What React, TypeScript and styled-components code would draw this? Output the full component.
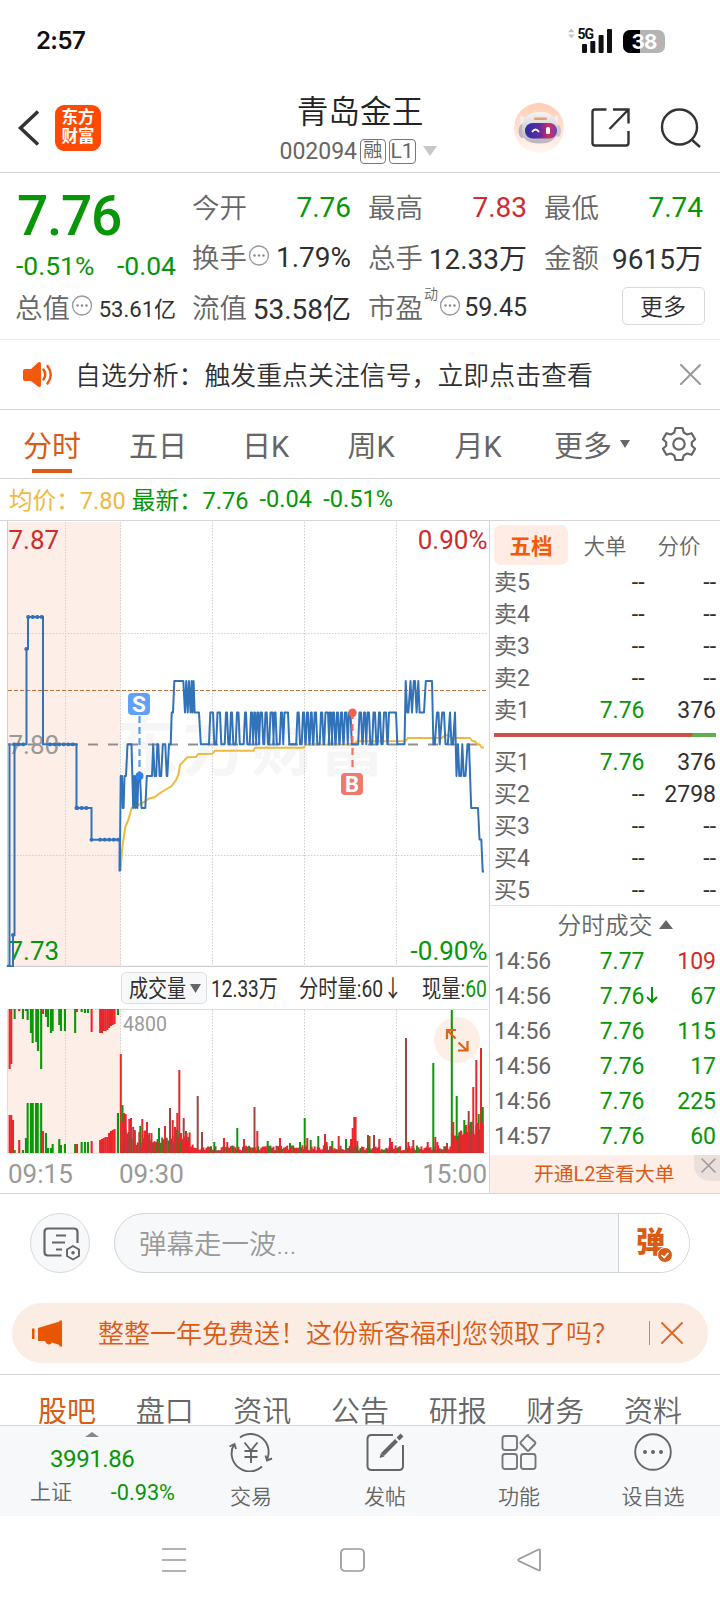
import React from 'react';
import styled, { createGlobalStyle } from 'styled-components';

const GREEN = '#079607';
const RED = '#cf2b2b';
const ORANGE = '#d95b16';
const GREY = '#666';
const INK = '#303030';
const LINE = '#d6d6d6';

const Global = createGlobalStyle`
  * { box-sizing: border-box; }
  body {
    margin: 0;
    background: #fff;
    color: ${INK};
    font-family: Roboto, "Noto Sans CJK SC", sans-serif;
    -webkit-font-smoothing: antialiased;
  }
  svg { display: block; flex: none; }
`;

const Screen = styled.div`
  width: 720px;
  height: 1604px;
  overflow: hidden;
  display: flex;
  flex-direction: column;
  background: #fff;
  white-space: nowrap;
`;

/* ---------- status bar and header ---------- */

const StatusBar = styled.div`
  height: 90px;
  flex: none;
  padding: 27px 55px 0 36px;
  display: flex;
  justify-content: space-between;
  align-items: flex-start;
`;

const Clock = styled.div`
  font: 600 24px/28px Inter, Roboto, sans-serif;
  color: #111;
  letter-spacing: -0.6px;
`;

const Header = styled.header`
  height: 83px;
  flex: none;
  border-bottom: 1px solid ${LINE};
  display: grid;
  grid-template-columns: 1fr 170px 1fr;
`;

const HeaderSide = styled.div<{ $end?: boolean }>`
  display: flex;
  align-items: center;
  height: 75px;
  padding: ${(p) => (p.$end ? '0 19px 0 0' : '0 0 0 17px')};
  justify-content: ${(p) => (p.$end ? 'flex-end' : 'flex-start')};
  gap: ${(p) => (p.$end ? '27px' : '15px')};
  > svg:last-child { margin-left: ${(p) => (p.$end ? '3px' : '0')}; }
`;

const AppLogo = styled.div`
  width: 46px;
  height: 46px;
  border-radius: 9px;
  background: #ff4a05;
  color: #fff;
  font-weight: 700;
  font-size: 16.5px;
  line-height: 19px;
  text-align: center;
  padding-top: 3px;
  white-space: normal;
`;

const TitleBlock = styled.div`
  display: flex;
  flex-direction: column;
  align-items: center;
`;

const StockName = styled.h1`
  margin: 3px 0 0;
  font-size: 31.7px;
  font-weight: 350;
  line-height: 40px;
  color: #222;
`;

const CodeRow = styled.div`
  display: flex;
  align-items: center;
  height: 34px;
  margin-top: 1px;
  padding-right: 4px;
  gap: 3px;
  font-size: 23px;
  color: ${GREY};
`;

const Badge = styled.span`
  height: 25px;
  width: 25.5px;
  border: 1px solid #777;
  border-radius: 4px;
  font-size: 19px;
  line-height: 22px;
  display: flex;
  justify-content: center;
`;

const WideBadge = styled(Badge)`
  width: 27px;
  font-size: 21px;
`;

const CodeArrow = styled.span`
  margin-left: 4px;
`;

/* ---------- quote summary ---------- */

const Quote = styled.section`
  height: 167px;
  flex: none;
  border-bottom: 1px solid #ececec;
  padding: 9px 17px 0 16px;
  display: flex;
  gap: 17px;
`;

const PriceColumn = styled.div`
  width: 160px;
  color: ${GREEN};
`;

const BigPrice = styled.div`
  font-size: 55px;
  font-weight: 500;
  line-height: 68px;
  letter-spacing: -1.3px;
  margin-left: 1px;
`;

const ChangeRow = styled.div`
  display: flex;
  justify-content: space-between;
  font-size: 26.5px;
  line-height: 32px;
`;

const StatGrid = styled.div`
  flex: 1;
  display: grid;
  grid-template-columns: repeat(3, 158px);
  grid-auto-rows: 50px;
  column-gap: 18px;
`;

const Stat = styled.div<{ $size?: number; $color?: string }>`
  height: 50px;
  display: flex;
  align-items: center;
  justify-content: space-between;
  color: ${(p) => p.$color ?? INK};
  font-size: ${(p) => p.$size ?? 28}px;
`;

const StatLabel = styled.span`
  display: flex;
  align-items: center;
  margin-left: -1px;
  padding-bottom: 2px;
  font-size: 27.5px;
  font-weight: 350;
  color: ${GREY};
`;

const Sup = styled.sup`
  font-size: 14px;
  line-height: 14px;
  margin: -24px 0 0 1px;
  align-self: center;
`;

const MoreButton = styled.button`
  justify-self: end;
  align-self: center;
  width: 83px;
  height: 38px;
  margin: 0 -1.5px 2px 0;
  padding: 0 0 3px;
  border: 1px solid #d9dadb;
  border-radius: 5px;
  background: #fff;
  font: inherit;
  font-weight: 350;
  font-size: 23px;
  color: ${INK};
`;

/* ---------- notice, period tabs, legend ---------- */

const Notice = styled.div`
  height: 70px;
  flex: none;
  border-bottom: 1px solid ${LINE};
  padding: 0 19px 0 22px;
  display: flex;
  align-items: center;
  font-size: 25.9px;
`;

const NoticeText = styled.div`
  flex: 1;
  margin-left: 22px;
  padding-bottom: 3px;
  font-weight: 350;
`;

const Periods = styled.nav`
  height: 69px;
  flex: none;
  border-bottom: 1px solid ${LINE};
  padding-left: 23px;
  display: grid;
  grid-template-columns: 106px 113px 105.5px 107px 99.5px 107px 1fr;
  align-items: center;
`;

const Period = styled.div<{ $active?: boolean }>`
  display: flex;
  align-items: center;
  gap: 8px;
  height: 68px;
  padding-bottom: 1px;
  font-size: 29px;
  color: ${(p) => (p.$active ? ORANGE : GREY)};
  background: ${(p) =>
    p.$active ? `linear-gradient(${ORANGE}, ${ORANGE}) 9px 59px / 40px 4px no-repeat` : 'none'};
`;

const Legend = styled.div`
  height: 42px;
  flex: none;
  border-bottom: 1px solid ${LINE};
  padding: 0 0 2px 9px;
  display: flex;
  align-items: center;
  font-size: 23.6px;
  color: ${GREEN};
`;

const LegendItem = styled.span<{ $gap: number; $color?: string }>`
  margin-right: ${(p) => p.$gap}px;
  color: ${(p) => p.$color ?? 'inherit'};
`;

/* ---------- trading area ---------- */

const Trading = styled.main`
  height: 673px;
  flex: none;
  display: flex;
  border-bottom: 1px solid ${LINE};
`;

const Charts = styled.div`
  width: 490px;
  border-right: 1px solid ${LINE};
`;

const VolumeBar = styled.div`
  height: 42px;
  padding: 5px 0 0 121px;
  display: flex;
  align-items: flex-start;
`;

const VolumeSelect = styled.div`
  width: 87px;
  height: 32px;
  border: 1px solid #dcdee0;
  border-radius: 5px;
  background: #f7f8fa;
  padding: 1px 5px 0 7px;
  display: flex;
  align-items: center;
  justify-content: space-between;
`;

const Narrow = styled.div<{ $w: number; $ml?: number; $k?: number }>`
  width: ${(p) => p.$w}px;
  margin-left: ${(p) => p.$ml ?? 0}px;
  flex: none;
  font-size: 23.5px;
  line-height: 34px;
  > span {
    display: inline-block;
    transform: scaleX(${(p) => p.$k ?? 0.8});
    transform-origin: left center;
  }
`;

const TimeAxis = styled.div`
  height: 39px;
  padding: 0 2px 0 8px;
  display: flex;
  align-items: center;
  font-size: 26px;
  color: #999;
`;

const AxisLabel = styled.span<{ $w?: number }>`
  width: ${(p) => (p.$w ? `${p.$w}px` : 'auto')};
  margin-left: ${(p) => (p.$w ? '0' : 'auto')};
`;

const Book = styled.aside`
  flex: 1;
  display: flex;
  flex-direction: column;
  > * { flex: none; }
`;

const BookTabs = styled.div`
  height: 46px;
  padding: 4px 4px 0 4px;
  display: flex;
`;

const BookTab = styled.div<{ $active?: boolean }>`
  width: 74px;
  height: 40px;
  border-radius: 7px;
  text-align: center;
  line-height: 43px;
  font-size: 21.5px;
  font-weight: ${(p) => (p.$active ? 700 : 350)};
  color: ${(p) => (p.$active ? '#f25a08' : GREY)};
  background: ${(p) => (p.$active ? '#ffece4' : 'transparent')};
`;

const Row = styled.div<{ $h: number }>`
  height: ${(p) => p.$h}px;
  line-height: ${(p) => p.$h}px;
  padding: 0 4px 0 4px;
  display: grid;
  grid-template-columns: 71px 79.5px 1fr;
  font-size: 23px;
`;

const Cell = styled.span<{ $right?: boolean; $color?: string }>`
  text-align: ${(p) => (p.$right ? 'right' : 'left')};
  color: ${(p) => p.$color ?? INK};
`;

const Down = styled.span`
  display: inline-block;
  width: 0;
  > svg { display: inline-block; margin-left: 1px; }
`;

const RatioBar = styled.div`
  height: 4px;
  margin: 6px 4px 10px 4px;
  background: linear-gradient(115deg, #cc4f4b 88.7%, #5fae50 89.1%);
`;

const TicksTitle = styled.div`
  height: 39px;
  margin-top: -2px;
  border-top: 1px solid #e2e2e2;
  display: flex;
  align-items: center;
  justify-content: center;
  gap: 7px;
  padding: 0 0 2px 21px;
  font-size: 23.7px;
  font-weight: 350;
  color: ${GREY};
`;

const L2Banner = styled.div`
  height: 38.4px;
  display: flex;
  background: #fdeee8;
  color: ${ORANGE};
  font-size: 19.8px;
  line-height: 39px;
  padding-left: 44px;
  justify-content: space-between;
`;

const CornerClose = styled.div`
  width: 26px;
  height: 26px;
  border-bottom-left-radius: 16px;
  background: #ebdfdb;
  padding: 3px 0 0 7px;
`;

/* ---------- comment bar and promo ---------- */

const CommentRow = styled.div`
  height: 109px;
  flex: none;
  padding: 19px 30px 0;
  display: flex;
  gap: 24px;
`;

const RoundButton = styled.div`
  width: 60px;
  height: 60px;
  border: 1px solid #d7d9dd;
  border-radius: 50%;
  background: #f7f8fa;
  padding: 13px 0 0 12px;
`;

const CommentBox = styled.div`
  flex: 1;
  height: 60px;
  border: 1px solid #d3d5d8;
  border-radius: 30px;
  background: #f7f8fa;
  overflow: hidden;
  display: flex;
  justify-content: space-between;
  padding-left: 24px;
  font-size: 27.5px;
  font-weight: 350;
  line-height: 61px;
  color: #999;
`;

const SendButton = styled.div`
  width: 71px;
  border-left: 1px solid #d3d5d8;
  background: #fff;
  padding-left: 17px;
  display: flex;
  color: ${ORANGE};
  font-size: 29px;
  font-weight: 900;
  line-height: 59px;
  > svg { margin: 33px 0 0 -8px; }
`;

const Promo = styled.div`
  height: 60px;
  flex: none;
  margin: 0 12px 11px;
  border-radius: 30px;
  background: #fcede4;
  padding: 0 25px 0 20px;
  display: flex;
  align-items: center;
  font-size: 26px;
  font-weight: 350;
  color: ${ORANGE};
`;

const PromoText = styled.div`
  flex: 1;
  margin-left: 35px;
  padding-bottom: 3px;
`;

const PromoDivider = styled.i`
  width: 1px;
  height: 24px;
  background: #c98a55;
  margin-right: 11px;
`;

/* ---------- bottom ---------- */

const Sections = styled.nav`
  height: 52px;
  flex: none;
  overflow: hidden;
  border-top: 1px solid ${LINE};
  border-bottom: 1px solid ${LINE};
  padding: 16px 38px 0;
  display: flex;
  justify-content: space-between;
  font-size: 29px;
  font-weight: 350;
  line-height: 42px;
`;

const Section = styled.span<{ $active?: boolean }>`
  font-weight: ${(p) => (p.$active ? 400 : 350)};
  color: ${(p) => (p.$active ? ORANGE : GREY)};
`;

const BottomBar = styled.footer`
  height: 90px;
  flex: none;
  background: #f7f8fa;
  display: grid;
  grid-template-columns: 184px repeat(4, 134px);
`;

const IndexCell = styled.div`
  padding: 6px 9px 0 30px;
  color: ${GREEN};
`;

const IndexArrow = styled.div`
  padding-left: 55px;
`;

const IndexValue = styled.div`
  font-size: 24px;
  line-height: 34px;
  margin-top: 5px;
  padding-left: 20px;
  letter-spacing: -0.4px;
`;

const IndexRow = styled.div`
  display: flex;
  justify-content: space-between;
  font-size: 21.7px;
  line-height: 33px;
`;

const IndexName = styled.span`
  font-size: 21px;
  font-weight: 350;
  color: ${GREY};
`;

const Action = styled.div`
  display: flex;
  flex-direction: column;
  align-items: center;
  gap: 9px;
  padding-top: 6px;
  font-size: 21px;
  font-weight: 350;
  line-height: 32px;
  color: ${GREY};
`;

const SystemNav = styled.div`
  flex: 1;
  display: flex;
  gap: 152.5px;
  padding: 32px 0 0 161px;
`;

/* ---------- small icons ---------- */

const Triangle = ({ w, h, up, color = '#666' }: { w: number; h: number; up?: boolean; color?: string }) => (
  <svg width={w} height={h} viewBox="0 0 10 10" preserveAspectRatio="none" fill={color}>
    <path d={up ? 'M0 10L5 0L10 10Z' : 'M0 0H10L5 10Z'} />
  </svg>
);

const Cross = ({ size, color, w = 2 }: { size: number; color: string; w?: number }) => (
  <svg width={size} height={size} stroke={color} strokeWidth={w} strokeLinecap="round">
    <path d={`M1 1L${size - 1} ${size - 1}M${size - 1} 1L1 ${size - 1}`} />
  </svg>
);

const InfoIcon = styled.svg`
  margin-left: 1px;
`;

const InfoDots = () => (
  <InfoIcon width="22" height="22">
    <circle cx="11" cy="10.500" r="9.500" fill="none" stroke="#999" strokeWidth="1.300" />
    <g fill="#888">
      <circle cx="6.500" cy="10.500" r="1.200" />
      <circle cx="11" cy="10.500" r="1.200" />
      <circle cx="15.500" cy="10.500" r="1.200" />
    </g>
  </InfoIcon>
);

const StatusIcons = () => (
  <svg width="100" height="30" viewBox="0 0 100 30">
    <path d="M3 5.200L6.300 1.500L9.500 5.200ZM3 7.600L6.300 11.200L9.500 7.600Z" fill="#c4c4c4" />
    <text x="12.500" y="12" fontFamily="Roboto" fontWeight="700" fontSize="14" letterSpacing="-1" fill="#111">5G</text>
    <g fill="#111">
      <rect x="17" y="17" width="5" height="9" rx="1" />
      <rect x="25.300" y="14" width="5" height="12" rx="1" />
      <rect x="33.600" y="8" width="5" height="18" rx="1" />
      <rect x="42" y="2" width="5" height="24" rx="1" />
    </g>
    <rect x="58" y="3" width="42" height="23" rx="7" fill="#b4b4b4" />
    <rect x="98" y="10" width="4" height="9" rx="2" fill="#b4b4b4" />
    <path d="M75 3H65a7 7 0 0 0-7 7v9a7 7 0 0 0 7 7h10Z" fill="#000" />
    <text x="79" y="22.300" textAnchor="middle" fontFamily="Inter" fontWeight="700" fontSize="20.500" letterSpacing="-0.800" fill="#fff">38</text>
  </svg>
);

const Robot = () => (
  <svg width="50" height="50" viewBox="0 0 50 50">
    <defs>
      <linearGradient id="halo" x1="0" y1="0" x2="0" y2="1">
        <stop offset="0" stopColor="#ffcdb4" />
        <stop offset="1" stopColor="#fff6f1" />
      </linearGradient>
      <linearGradient id="visor" x1="0" y1="0" x2="1" y2="0">
        <stop offset="0" stopColor="#2b2f9e" />
        <stop offset=".45" stopColor="#5e2ba3" />
        <stop offset=".75" stopColor="#d0305c" />
        <stop offset="1" stopColor="#6a3fc0" />
      </linearGradient>
      <linearGradient id="shell" x1="0" y1="0" x2="0" y2="1">
        <stop offset="0" stopColor="#f8f3f3" />
        <stop offset="1" stopColor="#b9b4bd" />
      </linearGradient>
    </defs>
    <circle cx="25" cy="25" r="25" fill="url(#halo)" />
    <path d="M7 21L5.500 12L14 16ZM43 21L44.500 12L36 16Z" fill="#f4eff0" />
    <ellipse cx="8.500" cy="28" rx="4" ry="7" fill="#b9b6be" />
    <ellipse cx="44" cy="28" rx="3" ry="6" fill="#c9c6ce" />
    <path d="M8 26C8 14 15 9 26 9C37 9 43.500 15 43.500 26C43.500 36 37 40.500 26 40.500C14 40.500 8 37 8 26Z" fill="url(#shell)" />
    <rect x="11" y="20" width="32" height="15.500" rx="7.500" fill="url(#visor)" />
    <path d="M18 29q3.500-5 7 0" stroke="#fff" strokeWidth="1.800" fill="none" />
    <rect x="32" y="24" width="4" height="7" rx="1.500" fill="#fff" />
    <rect x="20" y="14.500" width="13" height="2.500" rx="1" fill="#e0a06c" />
  </svg>
);

const Gear = () => (
  <svg width="36" height="36" viewBox="0 0 36 36" fill="none" stroke="#666" strokeWidth="2.200">
    <path d="M14.500 2H21.500L22.800 6.600L26.200 8.500L30.600 7.200L34.100 13.200L30.800 16.200V19.800L34.100 22.800L30.600 28.800L26.200 27.500L22.800 29.400L21.500 34H14.500L13.200 29.400L9.800 27.500L5.400 28.800L1.900 22.800L5.200 19.800V16.200L1.900 13.200L5.400 7.200L9.800 8.500L13.200 6.600Z" strokeLinejoin="round" />
    <circle cx="18" cy="18" r="5.700" />
  </svg>
);

/* ---------- price chart ---------- */

const TOP = 521;
const L = { a: 681, b: 712.5, c: 744.3, d: 776, e: 808 };

const preOpen =
  'M8.500 744.300H9.500V966.500H13V935H14.500V744.300H26.500V649H28V617H43V744.300H76.500V808H91.500V839.700H119.600V871.500';

const early: [number, number][] = [
  [119.8, 871], [120.7, L.d], [122, L.d], [122.7, L.e], [123.6, L.e], [124.5, L.d], [126, L.d], [127.5, L.c],
  [131.5, L.c], [133.2, L.e], [134.3, L.d], [135.4, L.e], [136.2, L.d], [137.4, L.e], [138.4, L.d], [140, L.d],
  [141.5, L.e], [145.3, L.e], [146.8, L.d], [152, L.d], [153.2, L.c], [154.6, L.d], [156.2, L.d], [157.3, L.c],
  [158.3, L.c], [159.6, L.d], [161.2, L.d], [162.8, L.c], [165.3, L.c], [166.7, L.d], [167.3, L.d], [169, L.c],
  [170.7, L.c], [171.7, L.b], [173, L.b], [174.3, L.a], [183.3, L.a], [185, L.b], [186.2, L.a], [187.7, L.b],
  [188.9, L.a], [190.5, L.b], [191.6, L.a], [192.5, L.b], [193.6, L.a], [194.6, L.b], [199, L.b], [200.8, L.c],
];

/* spans [from, to] during which the price sits one tick above the previous close */
const peaks: [number, number][] = [
  [210.3, 213], [217.5, 220], [226, 227], [231, 232], [237, 238.5], [245, 246], [251, 252], [254.3, 255],
  [257.3, 258], [260.3, 262], [265.5, 266.7], [270.5, 272.5], [274.5, 275.5], [281, 282], [284.5, 288],
  [297.5, 298.7], [303, 304], [307, 308], [311, 311.7], [314.7, 316], [321, 322.2], [325.5, 328],
  [330, 331], [333, 334], [337, 338], [341, 342], [345, 346.5], [349, 350.5], [359.5, 361], [364, 365],
  [367.5, 369], [373.5, 375], [379, 380], [384, 386], [389, 396],
];

const late: [number, number][] = [
  [397, L.c], [404.5, L.c], [405.7, L.a], [407.2, L.b], [408.4, L.b], [410.5, L.a], [412, L.b], [413.8, L.a],
  [415, L.a], [416.6, L.b], [418.3, L.a], [419.6, L.b], [424, L.b], [425.8, L.a], [432, L.a], [433.4, L.c],
  [434.8, L.c], [437, L.b], [438.5, L.b], [439.7, L.c], [442.2, L.b], [444, L.b], [445.5, L.c], [447.8, L.c],
  [450, L.b], [451.5, L.c], [453, L.c], [455, L.b], [456.5, L.d], [458, L.c], [459.3, L.d], [461, L.d],
  [462.3, L.c], [463.7, L.d], [465.5, L.d], [467.5, L.c], [469, L.c], [471.2, L.e], [478, L.e], [479.5, 839.5],
  [481.3, 839.5], [482.7, 871.6], [484, 871.6],
];

const session: [number, number][] = [
  ...early,
  ...peaks.flatMap(([s, e]): [number, number][] => [[s - 1.3, L.c], [s, L.b], [e, L.b], [e + 1.3, L.c]]),
  ...late,
];

const average =
  '120.500,871 122.300,847 125.300,827 128.300,820 131.700,808 138.300,805 145,801.500 148.300,798.700 155,797 158,794.500 161.700,792 166.700,789 171.700,786 176,780 178.300,775 180,765 187.300,757.300 196,757 198,754 212.500,753.700 215,750.700 253.500,750.700 255,747.700 303.500,747.700 306,744.700 353,744.500 357.300,741.300 405.700,741 407.700,738 441.700,738 445,735.300 449.300,735.300 451,738 470,738 472.300,741 475,741.300 477.300,744.300 479.500,744.300 481.700,747.300 484,747.700';

const toPoints = (list: [number, number][]) => list.map((p) => p.join(',')).join(' ');

const PriceChart = () => (
  <svg width="489" height="446" viewBox={`0 ${TOP} 489 446`} fontFamily="Roboto, 'Noto Sans CJK SC', sans-serif" fontSize="26">
    <rect x="8" y="522" width="112.500" height="444" fill="#fdeee8" />
    <text x="114" y="770" fontSize="65" fontWeight="700" fill="#f6f6f6" letterSpacing="3.500">东方财富</text>
    <path d="M7.500 521V967" stroke="#d2d2d2" />
    <path d="M8 966.500H488" stroke="#d0d0d0" strokeWidth="1.500" />
    <path d="M65.500 522V966M120.500 522V966M212.500 522V966M304.500 522V966M396.500 522V966M8 633.500H487M8 855.500H487" stroke="#cfcfcf" strokeDasharray="1.500 1.500" fill="none" />
    <path d="M8 690.500H487" stroke="#c0713d" strokeWidth="1.200" strokeDasharray="4 2" />
    <path d="M8 744.500H487" stroke="#8f8f8f" strokeWidth="1.800" strokeDasharray="10 10" />
    <text x="8.500" y="753.500" fill="#999">7.80</text>
    <text x="8.500" y="548.800" fill={RED}>7.87</text>
    <text x="8.500" y="959.800" fill={GREEN}>7.73</text>
    <text x="487.500" y="548.800" textAnchor="end" fill={RED}>0.90%</text>
    <text x="487.500" y="959.800" textAnchor="end" fill={GREEN}>-0.90%</text>
    <polyline points={average} fill="none" stroke="#efb83e" strokeWidth="2" strokeLinejoin="round" />
    <path d={preOpen} fill="none" stroke="#3272b8" strokeWidth="2" />
    <path d="M8.500 966.500H12.500M14 744.300H26M28 617H43M50 744.300H76M77 808H90M100 839.700H119" stroke="#3272b8" strokeWidth="3.800" strokeLinecap="round" strokeDasharray="0.500 4" />
    <g fill="#3272b8">
      <circle cx="26.300" cy="649" r="2" />
      <circle cx="13" cy="935" r="2" />
      <circle cx="76.500" cy="808" r="2" />
      <circle cx="91.500" cy="839.700" r="2" />
    </g>
    <polyline points={toPoints(session)} fill="none" stroke="#3272b8" strokeWidth="2" strokeLinejoin="round" />
    <path d="M139.500 716V776" stroke="#5a9cf0" strokeWidth="2.200" strokeDasharray="7 4" />
    <circle cx="139.500" cy="776" r="4" fill="#2f80ea" />
    <rect x="128" y="693" width="22" height="22" rx="4" fill="#62a0f5" />
    <text x="139" y="712" textAnchor="middle" fontSize="22.500" fontWeight="700" fill="#fff">S</text>
    <path d="M352.500 712V772" stroke="#ee7364" strokeWidth="2.200" strokeDasharray="7 5" />
    <circle cx="352.500" cy="712.700" r="4.200" fill="#f26052" />
    <rect x="341" y="773" width="22" height="22" rx="4" fill="#ee7a6b" />
    <text x="352" y="791.800" textAnchor="middle" fontSize="22" fontWeight="700" fill="#fff">B</text>
  </svg>
);

/* ---------- volume chart ---------- */

const VR = '#e8262b';
const VG = '#0a980a';
const VM = '#a34240';

type Bar = [number, number, string];

const spikes: Bar[] = [
  [120.800, 99, VR], [122.500, 48, VG], [124, 40, VR], [125.700, 39, VR], [129.300, 34, VR], [131, 35, VR], [134.700, 23, VR],
  [140.300, 27, VG], [142.300, 34, VR], [144.500, 22, VR], [147, 31, VR], [149.300, 20, VR], [159, 25, VG], [165, 27, VR], [170, 45, VM],
  [172.700, 33, VR], [175, 26, VR], [177.300, 40, VR], [179.300, 83, VR], [181, 20, VR], [183.700, 35, VM], [186, 22, VG],
  [188.300, 16, VG], [197.700, 57, VM], [202, 21, VM], [214.300, 11, VG], [224, 15, VR], [227.300, 11, VR], [237.300, 25, VG],
  [244, 14, VR], [254.500, 46, VM], [257.300, 22, VR], [267.700, 12, VG], [280, 15, VR], [290, 10, VG], [300, 11, VG], [304.700, 35, VG],
  [307.300, 15, VR], [310.700, 13, VG], [318.300, 17, VG], [325, 19, VR], [326.700, 11, VR], [332.300, 12, VG], [338.700, 17, VR],
  [346, 14, VG], [351, 14, VR], [352.700, 25, VR], [354.300, 36, VR], [355.600, 36, VR], [357.300, 12, VR], [368, 18, VG],
  [369.500, 17, VR], [374, 18, VM], [379.300, 14, VR], [390, 15, VR], [392, 11, VR], [406, 115, VM], [408.300, 11, VR], [413.300, 13, VM],
  [427.700, 11, VR], [433.300, 90, VG], [435.300, 16, VR], [437.300, 11, VR], [447, 10, VR], [451.800, 143, VG], [453.300, 31, VR],
  [456.700, 57, VG], [459.300, 20, VR], [461.300, 22, VG], [464.300, 33, VG], [466, 28, VR], [468.700, 42, VM], [470.700, 31, VG],
  [473.300, 66, VR], [476.300, 93, VR], [478.700, 39, VG], [481, 105, VR], [482.800, 46, VG],
];

/* low base level of volume along the session */
const base = (x: number) => {
  if (x < 135) return 24;
  if (x < 152) return 17;
  if (x < 170) return 11;
  if (x < 190) return 17;
  if (x < 197) return 9;
  if (x < 450) return 5.5;
  return 14 + (x - 450) * 0.5;
};

const fill: Bar[] = Array.from({ length: 238 }, (_, i): Bar => {
  const x = 121 + i * 1.525;
  const n = Math.abs(Math.sin(i * 12.9898) * 43758.5453) % 1;
  const m = Math.abs(Math.sin(i * 78.233) * 12543.123) % 1;
  return [x, base(x) * (0.45 + n * 0.95), m < 0.65 ? VR : m < 0.85 ? VM : '#3c7a1c'];
});

const preTop: Bar[] = [
  [9.700, 60, VR], [11.300, 55, VR], [14.700, 10, VG], [19.300, 2, VR], [23, 10, VG], [26, 2, VG], [27.700, 11, VG],
  [31, 24, VG], [32.700, 34, VG], [36.300, 33, VG], [38, 42, VG], [41.200, 60, VG], [43, 5, VR], [46, 8, VG], [48, 18, VG],
  [51, 24, VG], [52.700, 22, VG], [59.300, 16, VG], [61, 22, VG], [65, 22, VG], [75.200, 24, VG], [77, 3, VR], [81.700, 3, VG],
  [85, 4, VG], [88, 4, VG], [91.700, 23, VR], [100.200, 24, VR], [102, 24, VR], [103.800, 22, VR], [105.600, 22, VR], [107.400, 21, VR],
  [109.200, 19, VR], [111, 17, VR], [112.800, 16, VR], [114.600, 15, VR], [118, 6, VG],
];

const preBottom: Bar[] = [
  [9.700, 38, VR], [11.300, 38, VR], [13, 33, VR], [14.700, 3, VG], [19.300, 13, VR], [23, 3, VG], [26, 15, VG], [27.700, 50, VG],
  [31, 50, VG], [32.800, 50, VG], [36, 50, VG], [37.800, 50, VG], [41.200, 50, VG], [43, 22, VR], [46, 20, VG], [48, 5, VG],
  [51, 5, VG], [52.700, 9, VG], [59.300, 14, VG], [61, 8, VG], [65, 9, VG], [75.200, 9, VG], [77, 9, VR], [81.700, 11, VG],
  [85, 11, VG], [88, 11, VG], [91.700, 12, VR], [100.200, 13, VR], [102, 14, VR], [103.800, 15, VR], [105.600, 16, VR], [107.400, 16, VR],
  [109.200, 20, VR], [111, 22, VR], [112.800, 23, VR], [114.600, 24, VR], [118, 40, VG],
];

const VolumeChart = () => (
  <svg width="489" height="145" viewBox="0 1009 489 145" fontFamily="Roboto, sans-serif">
    <rect x="8" y="1009" width="112.500" height="144" fill="#fdeee8" />
    <path d="M7.500 1009V1153M7 1009.500H488M7 1153.200H488" stroke="#dcdcdc" fill="none" />
    <path d="M65.500 1010V1152M120.500 1010V1152M212.500 1010V1152M304.500 1010V1152M396.500 1010V1152" stroke="#cfcfcf" strokeDasharray="1.500 1.500" />
    {preTop.map(([x, h, c]) => <rect key={x} x={x - 1.1} y={1009} width={2.1} height={h} fill={c} />)}
    {preBottom.map(([x, h, c]) => <rect key={x} x={x - 1.1} y={1153 - h} width={2.1} height={h} fill={c} />)}
    <circle cx="457" cy="1040" r="23" fill="#fdeee6" />
    {spikes.map(([x, h, c]) => <rect key={x} x={x - 1} y={1153 - h} width={2} height={h} fill={c} />)}
    {fill.map(([x, h, c]) => <rect key={x} x={x - 1} y={1153 - h} width={2} height={h} fill={c} />)}
    <text x="123" y="1031" fontSize="19.500" fill="#999">4800</text>
    <path d="M447 1039V1030H456M447.500 1030.500L455.500 1038.500M458.500 1042.500L467 1050.500M467.500 1041V1050.500H458" stroke="#dc6417" strokeWidth="2.200" fill="none" />
  </svg>
);

const NOTHING = '--';
const sells = [
  ['卖5', NOTHING, NOTHING], ['卖4', NOTHING, NOTHING], ['卖3', NOTHING, NOTHING], ['卖2', NOTHING, NOTHING], ['卖1', '7.76', '376'],
];
const buys = [
  ['买1', '7.76', '376'], ['买2', NOTHING, '2798'], ['买3', NOTHING, NOTHING], ['买4', NOTHING, NOTHING], ['买5', NOTHING, NOTHING],
];
const ticks = [
  ['14:56', '7.77', '109'], ['14:56', '7.76', '67'], ['14:56', '7.76', '115'],
  ['14:56', '7.76', '17'], ['14:56', '7.76', '225'], ['14:57', '7.76', '60'],
];

const Levels = ({ rows }: { rows: string[][] }) => (
  <>
    {rows.map(([name, price, qty]) => (
      <Row key={name} $h={32}>
        <Cell $color={GREY}>{name}</Cell>
        <Cell $right $color={price === NOTHING ? INK : GREEN}>{price}</Cell>
        <Cell $right>{qty}</Cell>
      </Row>
    ))}
  </>
);

const Current = styled.b`
  font-weight: 400;
  color: ${GREEN};
`;

export default function App() {
  return (
    <Screen>
      <Global />
      <StatusBar>
        <Clock>2:57</Clock>
        <StatusIcons />
      </StatusBar>

      <Header>
        <HeaderSide>
          <svg width="23" height="36" fill="none" stroke="#333" strokeWidth="3.500">
            <path d="M21 1.500L3.500 18L21 34.500" />
          </svg>
          <AppLogo>东方<br />财富</AppLogo>
        </HeaderSide>
        <TitleBlock>
          <StockName>青岛金王</StockName>
          <CodeRow>
            002094
            <Badge>融</Badge>
            <WideBadge>L1</WideBadge>
            <CodeArrow><Triangle w={14} h={10} color="#c8c8c8" /></CodeArrow>
          </CodeRow>
        </TitleBlock>
        <HeaderSide $end>
          <Robot />
          <svg width="39" height="39" fill="none" stroke="#333" strokeWidth="2.400">
            <path d="M15.500 1.500H4Q1.500 1.500 1.500 4V35Q1.500 37.500 4 37.500H35Q37.500 37.500 37.500 35V23M22 1.500H37.500V15.500M37 2L18.500 21" />
          </svg>
          <svg width="41" height="40" fill="none" stroke="#333" strokeWidth="2.400">
            <circle cx="19.500" cy="19" r="17.500" />
            <path d="M31.500 31.500L40 39" />
          </svg>
        </HeaderSide>
      </Header>

      <Quote>
        <PriceColumn>
          <BigPrice>7.76</BigPrice>
          <ChangeRow><span>-0.51%</span><span>-0.04</span></ChangeRow>
          <Stat $size={22}><StatLabel>总值<InfoDots /></StatLabel>53.61亿</Stat>
        </PriceColumn>
        <StatGrid>
          <Stat $color={GREEN}><StatLabel>今开</StatLabel>7.76</Stat>
          <Stat $color={RED}><StatLabel>最高</StatLabel>7.83</Stat>
          <Stat $color={GREEN}><StatLabel>最低</StatLabel>7.74</Stat>
          <Stat><StatLabel>换手<InfoDots /></StatLabel>1.79%</Stat>
          <Stat><StatLabel>总手</StatLabel>12.33万</Stat>
          <Stat><StatLabel>金额</StatLabel>9615万</Stat>
          <Stat><StatLabel>流值</StatLabel>53.58亿</Stat>
          <Stat $size={25}><StatLabel>市盈<Sup>动</Sup><InfoDots /></StatLabel>59.45</Stat>
          <MoreButton>更多</MoreButton>
        </StatGrid>
      </Quote>

      <Notice>
        <svg width="31" height="28" viewBox="0 0 31 28" fill="#f2590c">
          <path d="M3 8H9L16 1.500Q19 0 19 3V24Q19 27 16 25.500L9 20H3Q1 20 1 18V10Q1 8 3 8Z" />
          <path d="M21.500 8.500Q25 13.500 21.500 18.500M25.500 5Q32 13.500 25.500 22.500" fill="none" stroke="#f2590c" strokeWidth="2.500" strokeLinecap="round" />
        </svg>
        <NoticeText>自选分析：触发重点关注信号，立即点击查看</NoticeText>
        <Cross size={21} color="#999" />
      </Notice>

      <Periods>
        <Period $active>分时</Period>
        <Period>五日</Period>
        <Period>日K</Period>
        <Period>周K</Period>
        <Period>月K</Period>
        <Period>更多<Triangle w={10} h={8} /></Period>
        <Gear />
      </Periods>

      <Legend>
        <LegendItem $gap={6} $color="#efb83e">均价：7.80</LegendItem>
        <LegendItem $gap={11}>最新：7.76</LegendItem>
        <LegendItem $gap={11}>-0.04</LegendItem>
        <LegendItem $gap={0}>-0.51%</LegendItem>
      </Legend>

      <Trading>
        <Charts>
          <PriceChart />
          <VolumeBar>
            <VolumeSelect>
              <Narrow $w={58} $k={0.81}><span>成交量</span></Narrow>
              <Triangle w={11} h={9} />
            </VolumeSelect>
            <Narrow $w={70} $ml={4} $k={0.81}><span>12.33万</span></Narrow>
            <Narrow $w={102} $ml={18} $k={0.82}><span>分时量:60↓</span></Narrow>
            <Narrow $w={67} $ml={21} $k={0.82}><span>现量:<Current>60</Current></span></Narrow>
          </VolumeBar>
          <VolumeChart />
          <TimeAxis>
            <AxisLabel $w={111}>09:15</AxisLabel>
            <AxisLabel $w={70}>09:30</AxisLabel>
            <AxisLabel>15:00</AxisLabel>
          </TimeAxis>
        </Charts>

        <Book>
          <BookTabs>
            <BookTab $active>五档</BookTab>
            <BookTab>大单</BookTab>
            <BookTab>分价</BookTab>
          </BookTabs>
          <Levels rows={sells} />
          <RatioBar />
          <Levels rows={buys} />
          <TicksTitle>分时成交<Triangle w={14} h={9} up /></TicksTitle>
          {ticks.map(([time, price, qty], i) => (
            <Row key={i} $h={35.1}>
              <Cell $color={GREY}>{time}</Cell>
              <Cell $right $color={GREEN}>
                {price}
                {i === 1 && (
                  <Down>
                    <svg width="12" height="17" fill="none" stroke={GREEN} strokeWidth="2">
                      <path d="M6 0V15M1 10L6 15L11 10" />
                    </svg>
                  </Down>
                )}
              </Cell>
              <Cell $right $color={i === 0 ? RED : GREEN}>{qty}</Cell>
            </Row>
          ))}
          <L2Banner>
            开通L2查看大单
            <CornerClose><Cross size={15} color="#999" w={1.5} /></CornerClose>
          </L2Banner>
        </Book>
      </Trading>

      <CommentRow>
        <RoundButton>
          <svg width="38" height="34" viewBox="0 0 38 34" fill="none" stroke="#666" strokeWidth="2.200">
            <path d="M18.500 28.500H5Q1.500 28.500 1.500 25V5Q1.500 1.500 5 1.500H31Q34.500 1.500 34.500 5V16" />
            <path d="M13 8.500H23M9 15.500H22M13 22.500H19" />
            <path d="M30 19L36 22.500V29L30 32.500L24 29V22.500Z" strokeWidth="1.900" />
            <circle cx="30" cy="25.700" r="1.800" fill="#666" stroke="none" />
          </svg>
        </RoundButton>
        <CommentBox>
          弹幕走一波...
          <SendButton>
            弹
            <svg width="16" height="16">
              <circle cx="8" cy="8" r="7.500" fill={ORANGE} stroke="#fff" />
              <path d="M4.500 8L7.200 10.600L11.500 5.800" fill="none" stroke="#fff" strokeWidth="1.700" />
            </svg>
          </SendButton>
        </CommentBox>
      </CommentRow>

      <Promo>
        <svg width="31" height="27" viewBox="0 0 31 27" fill="#ea5504">
          <path d="M0 8.500H2.500V19H0ZM6 8L27.500 1.500V0.500H30V26.500H27.500V25L20 22.500Q18 26 14.500 23.500L13 21H6Z" />
        </svg>
        <PromoText>整整一年免费送！这份新客福利您领取了吗？</PromoText>
        <PromoDivider />
        <Cross size={22} color="#dc6a2c" />
      </Promo>

      <Sections>
        {['股吧', '盘口', '资讯', '公告', '研报', '财务', '资料'].map((name, i) => (
          <Section key={name} $active={i === 0}>{name}</Section>
        ))}
      </Sections>

      <BottomBar>
        <IndexCell>
          <IndexArrow><Triangle w={14} h={5} up color="#888" /></IndexArrow>
          <IndexValue>3991.86</IndexValue>
          <IndexRow><IndexName>上证</IndexName><span>-0.93%</span></IndexRow>
        </IndexCell>
        <Action>
          <svg width="44" height="40" viewBox="0 0 44 40" fill="none" stroke="#666" strokeWidth="1.900">
            <path d="M11 5.500A18 18 0 0 1 38 27.500M33 34.500A18 18 0 0 1 5 12.500M0.500 14.500L5.500 12L7 17M43 26.500L38 28.500L36.500 23.500" />
            <path d="M15.500 10.500L22 18.500L28.500 10.500M22 18.500V31M15.500 19H28.500M15.500 25H28.500" />
          </svg>
          交易
        </Action>
        <Action>
          <svg width="38" height="40" viewBox="0 0 38 40" fill="none" stroke="#666" strokeWidth="2">
            <path d="M27 3H5.500Q1.500 3 1.500 7V34Q1.500 38 5.500 38H33Q37 38 37 34V13" />
            <path d="M16.500 22.500L30.500 8.500" strokeWidth="4" />
            <path d="M32 7L36 3" strokeWidth="4" />
            <path d="M13.500 26L15 21L18.500 24.500Z" fill="#666" stroke="none" />
          </svg>
          发帖
        </Action>
        <Action>
          <svg width="36" height="40" viewBox="0 0 36 40" fill="none" stroke="#777" strokeWidth="1.900">
            <rect x="1.500" y="4" width="14.500" height="14" rx="2.500" />
            <rect x="1.500" y="22" width="14.500" height="15" rx="2.500" />
            <rect x="20" y="22" width="14.500" height="15" rx="2.500" />
            <path d="M26.200 3.200L34 10Q34.800 11 34 12L27.800 18.500Q27 19.300 26.200 18.500L19.800 12Q19 11 19.800 10L26 3.400Q27 2.600 28 3.400" />
          </svg>
          功能
        </Action>
        <Action>
          <svg width="40" height="40" viewBox="0 0 40 40">
            <circle cx="20" cy="20" r="17.800" fill="none" stroke="#666" strokeWidth="1.900" />
            <g fill="#666">
              <circle cx="12" cy="20" r="2" />
              <circle cx="20" cy="20" r="2" />
              <circle cx="28" cy="20" r="2" />
            </g>
          </svg>
          设自选
        </Action>
      </BottomBar>

      <SystemNav>
        <svg width="26" height="24" stroke="#999" strokeWidth="1.700"><path d="M1 1H25M1 12H25M1 23H25" /></svg>
        <svg width="25" height="24" fill="none" stroke="#999" strokeWidth="1.700"><rect x="1" y="1" width="23" height="22" rx="4" /></svg>
        <svg width="24" height="24" fill="none" stroke="#999" strokeWidth="1.700"><path d="M21.500 1.500Q23 1 23 3V21Q23 23 21.500 22.300L2 13Q0.500 12 2 11Z" /></svg>
      </SystemNav>
    </Screen>
  );
}
